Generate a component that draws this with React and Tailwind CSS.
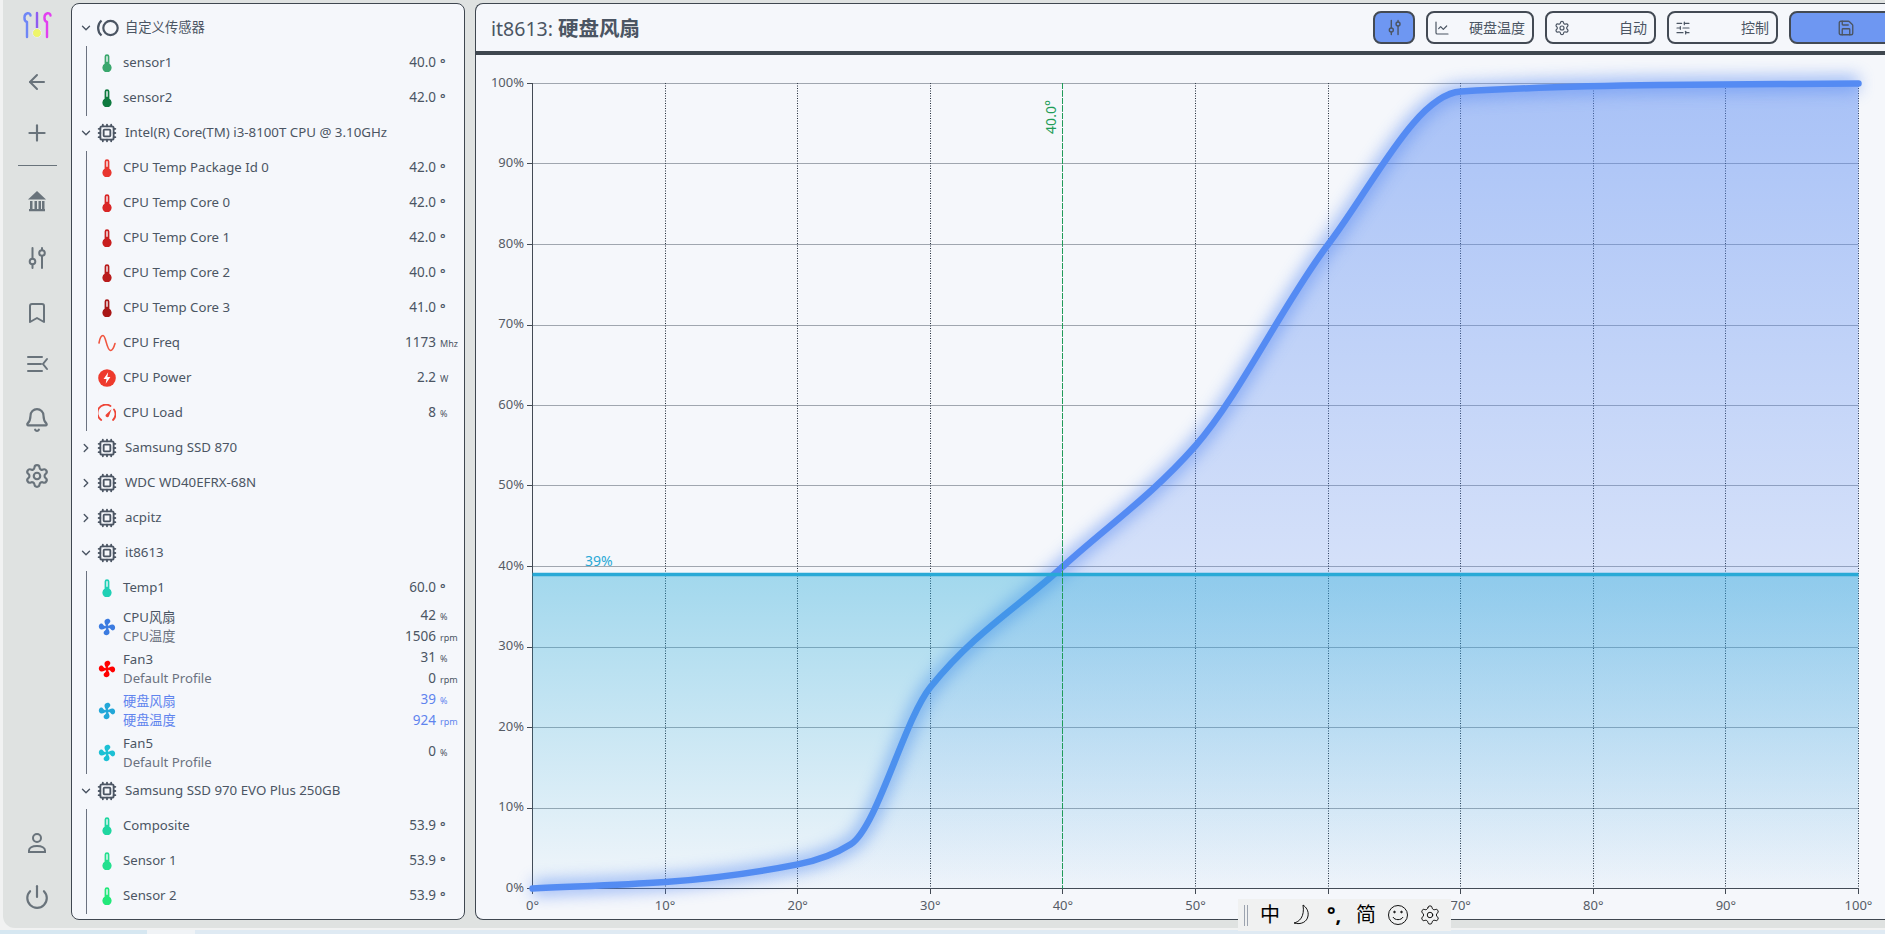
import React from 'react';
import { ArrowLeft, Plus, Bookmark, Bell, Settings, Power, ChevronDown, ChevronRight, Cpu, ChartLine, SlidersHorizontal, Save } from 'lucide-react';

const Thermo = ({ color }) => (
  <svg width="10" height="18" viewBox="0 0 10 18">
    <path d="M2.6 2.6a2.4 2.4 0 0 1 4.8 0v7.2a4.6 4.6 0 1 1-4.8 0z" fill={color} />
    <rect x="4.3" y="2" width="1.4" height="6" rx="0.7" fill="#f5f7fb" />
  </svg>
);

const blade = 'M9 9C7.800 7 6.200 5.500 6.500 3.300 6.800 1.200 9.500 .2 11.300 1.300 12.900 2.300 12.600 4.400 11.200 5.200 10 5.900 9.900 7.500 9 9z';

const Fan = ({ color }) => (
  <svg width="18" height="18" viewBox="0 0 18 18" fill={color}>
    <circle cx="9" cy="9" r="2" />
    <path d={blade} />
    <path d={blade} transform="rotate(90 9 9)" />
    <path d={blade} transform="rotate(180 9 9)" />
    <path d={blade} transform="rotate(270 9 9)" />
  </svg>
);

const Freq = () => (
  <svg width="18" height="18" viewBox="0 0 18 18" fill="none" stroke="#f0553f" strokeWidth="1.600" strokeLinecap="round">
    <path d="M1 9C2 3 3.500 1.500 5 1.500 8 1.500 8.500 16 12.500 16.500 14.500 16.700 16 13 17 9.500" />
  </svg>
);

const Bolt = () => (
  <svg width="18" height="18" viewBox="0 0 18 18">
    <circle cx="9" cy="9" r="8.800" fill="#ee3a2c" />
    <path d="M10.200 3.200 5.600 10h2.900l-.8 4.800L12.400 8H9.400z" fill="#fff" />
  </svg>
);

const Gauge = () => (
  <svg width="18" height="18" viewBox="0 0 18 18" fill="none" stroke="#ee4436" strokeWidth="1.800" strokeLinecap="round">
    <path d="M3.200 16A8 8 0 0 1 12.500 2" />
    <path d="M16 5.500A8 8 0 0 1 15 16" />
    <path d="M7.500 11 13.500 5.200 10.800 12.500A1.900 1.900 0 0 1 7.500 11z" fill="#ee4436" stroke="none" />
  </svg>
);

const rowIcons = { freq: <Freq />, bolt: <Bolt />, gauge: <Gauge /> };

const Sensor = ({ icon, color, name, value, unit }) => (
  <div className="flex h-[35px] items-center pr-[3px]">
    <div className="ml-[11px] flex w-[18px] shrink-0 justify-center">
      {icon ? rowIcons[icon] : <Thermo color={color} />}
    </div>
    <span className="ml-[7px] flex-1 text-[13.200px] leading-none text-[#4b5563]">{name}</span>
    <span className="text-right text-[13.500px] leading-none text-[#4b5563]">{value}</span>
    <span className={`ml-[4px] w-[21px] leading-none text-[#4b5563] ${unit === '°' ? 'text-[13px] font-semibold' : 'text-[9px]'}`}>{unit}</span>
  </div>
);

const FanRow = ({ color, name, profile, pct, rpm, active }) => {
  const text = active ? 'text-[#5f84ee]' : 'text-[#4b5563]';
  const sub = active ? 'text-[#5f84ee]' : 'text-[#6b7280]';
  return (
    <div className="flex h-[42px] items-center pr-[3px]">
      <div className="ml-[11px] flex w-[18px] shrink-0 justify-center">
        <Fan color={color} />
      </div>
      <div className="ml-[7px] flex-1 text-[13.200px] leading-[19px]">
        <div className={text}>{name}</div>
        <div className={sub}>{profile}</div>
      </div>
      <div className="text-[13.500px] leading-[18.500px]">
        <div className="flex items-baseline justify-end">
          <span className={text}>{pct}</span>
          <span className={`ml-[4px] w-[21px] text-[9px] ${text}`}>%</span>
        </div>
        {rpm !== undefined && (
          <div className="flex items-baseline justify-end">
            <span className={text}>{rpm}</span>
            <span className={`ml-[4px] w-[21px] text-[9px] ${text}`}>rpm</span>
          </div>
        )}
      </div>
    </div>
  );
};

const DeviceHead = ({ name, open, custom }) => (
  <div className="flex h-[35px] items-center pl-[7px]">
    {open ? (
      <ChevronDown size={14} strokeWidth={2.400} className="shrink-0 text-[#4b5563]" />
    ) : (
      <ChevronRight size={14} strokeWidth={2.400} className="shrink-0 text-[#4b5563]" />
    )}
    <div className="ml-[4px] flex w-[20px] shrink-0 justify-center">
      {custom ? (
        <svg width="23" height="18" viewBox="0 0 23 18" fill="none" stroke="#4b5563" strokeWidth="2.200" className="shrink-0">
          <circle cx="14.500" cy="9" r="7.200" />
          <path d="M5.500 1.500A10 10 0 0 0 5.500 16.500" />
        </svg>
      ) : (
        <Cpu size={20} strokeWidth={2.200} className="text-[#4b5563]" />
      )}
    </div>
    <span className="ml-[8px] text-[13.300px] leading-none text-[#4b5563]">{name}</span>
  </div>
);

const Group = ({ children }) => <div className="ml-[14px] border-l border-[#6b7280]">{children}</div>;

const Sidebar = () => (
  <aside className="h-[917px] w-[394px] shrink-0 overflow-hidden rounded-lg border border-[#3f4750] bg-[#f5f7fb] pt-[6.500px]">
    <DeviceHead name="自定义传感器" open custom />
    <Group>
      <Sensor color="#3aa76d" name="sensor1" value="40.0" unit="°" />
      <Sensor color="#0e7a3f" name="sensor2" value="42.0" unit="°" />
    </Group>
    <DeviceHead name="Intel(R) Core(TM) i3-8100T CPU @ 3.10GHz" open />
    <Group>
      <Sensor color="#e8362f" name="CPU Temp Package Id 0" value="42.0" unit="°" />
      <Sensor color="#d92626" name="CPU Temp Core 0" value="42.0" unit="°" />
      <Sensor color="#c81e1e" name="CPU Temp Core 1" value="42.0" unit="°" />
      <Sensor color="#b91c1c" name="CPU Temp Core 2" value="40.0" unit="°" />
      <Sensor color="#a81616" name="CPU Temp Core 3" value="41.0" unit="°" />
      <Sensor icon="freq" name="CPU Freq" value="1173" unit="Mhz" />
      <Sensor icon="bolt" name="CPU Power" value="2.2" unit="W" />
      <Sensor icon="gauge" name="CPU Load" value="8" unit="%" />
    </Group>
    <DeviceHead name="Samsung SSD 870" />
    <DeviceHead name="WDC WD40EFRX-68N" />
    <DeviceHead name="acpitz" />
    <DeviceHead name="it8613" open />
    <Group>
      <Sensor color="#1fd0b5" name="Temp1" value="60.0" unit="°" />
      <FanRow color="#3b7be0" name="CPU风扇" profile="CPU温度" pct="42" rpm="1506" />
      <FanRow color="#ff0000" name="Fan3" profile="Default Profile" pct="31" rpm="0" />
      <FanRow color="#22a7d8" name="硬盘风扇" profile="硬盘温度" pct="39" rpm="924" active />
      <FanRow color="#1cc0d4" name="Fan5" profile="Default Profile" pct="0" />
    </Group>
    <DeviceHead name="Samsung SSD 970 EVO Plus 250GB" open />
    <Group>
      <Sensor color="#1fd6a0" name="Composite" value="53.9" unit="°" />
      <Sensor color="#24e08f" name="Sensor 1" value="53.9" unit="°" />
      <Sensor color="#22e87a" name="Sensor 2" value="53.9" unit="°" />
    </Group>
  </aside>
);

const Logo = () => (
  <svg width="30" height="28" viewBox="0 0 30 28" fill="none" strokeWidth="2.400" strokeLinecap="round">
    <path d="M5 26V11M5 11C1.500 10 1.500 3 5.500 2.200 7 2 8.500 3 8.500 4.500" stroke="#6f86f6" />
    <path d="M25 26V11M25 11C21.500 10 21.500 3 25.500 2.200 27 2 28.500 3 28.500 4.500" stroke="#e23ff0" />
    <path d="M15 2V20" stroke="#8f5cf0" />
    <circle cx="15" cy="22" r="4.500" fill="#eef56a" stroke="#e9ecef" strokeWidth="1" />
  </svg>
);

const Tune = ({ size = 24, className }) => (
  <svg width={size} height={size} viewBox="0 0 24 24" fill="none" stroke="currentColor" strokeWidth="2" strokeLinecap="round" className={className}>
    <circle cx="7.500" cy="15.500" r="2.800" />
    <path d="M7.500 2v10.500M7.500 18.500V22" />
    <circle cx="17" cy="7" r="2.800" />
    <path d="M17 2v2M17 10v12" />
  </svg>
);

const Rail = () => (
  <nav className="flex h-[917px] w-[68px] shrink-0 flex-col items-center text-[#69737b]">
    <div className="mt-[8px] h-[28px]">
      <Logo />
    </div>
    <ArrowLeft size={24} strokeWidth={2} className="mt-[31px]" />
    <Plus size={26} strokeWidth={2} className="mt-[26px]" />
    <div className="mt-[19px] h-px w-[39px] bg-[#69737b]" />
    <svg width="24" height="24" viewBox="0 0 24 24" className="mt-[23px]" fill="currentColor">
      <path d="M12 2 3 10.500h18z" />
      <path d="M5 12h2.500v8H5zM9.500 12H12v8H9.500zM13.500 12H16v8h-2.500zM17 12h2.500v8H17zM4 20h16v2.200H4z" />
    </svg>
    <Tune className="mt-[33px]" />
    <Bookmark size={24} strokeWidth={2} className="mt-[31px]" />
    <svg width="24" height="24" viewBox="0 0 24 24" fill="none" stroke="currentColor" strokeWidth="2" strokeLinecap="round" className="mt-[27px]">
      <path d="M3 5h14M3 12h13M3 19h14M22 7l-4 5 4 5" />
    </svg>
    <Bell size={26} strokeWidth={2} className="mt-[31px]" />
    <Settings size={26} strokeWidth={2} className="mt-[30px]" />
    <svg width="24" height="24" viewBox="0 0 24 24" fill="none" stroke="currentColor" strokeWidth="2" strokeLinecap="round" className="mt-auto">
      <circle cx="12" cy="7" r="4" />
      <path d="M4 21v-1.500C4 17 7 15 12 15s8 2 8 4.500V21z" />
    </svg>
    <Power size={26} strokeWidth={2} className="mb-[10px] mt-[29px]" />
  </nav>
);

const points = [[0, 0], [10, 0.8], [20, 3], [24, 5.5], [30, 25], [40, 40], [50, 55], [60, 80], [70, 99], [85, 99.8], [100, 100]];
const X = (t) => 532.5 + 13.26 * t;
const Y = (p) => 888.5 - 8.05 * p;
const snap = (v) => Math.round(v - 0.5) + 0.5;

// monotone cubic through the profile points
const buildCurve = () => {
  const n = points.length;
  const d = [];
  for (let i = 0; i < n - 1; i++) d.push((points[i + 1][1] - points[i][1]) / (points[i + 1][0] - points[i][0]));
  const m = [d[0]];
  for (let i = 1; i < n - 1; i++) m.push((2 * d[i - 1] * d[i]) / (d[i - 1] + d[i]));
  m.push(d[n - 2]);
  let path = `M${X(0)} ${Y(0)}`;
  for (let i = 0; i < n - 1; i++) {
    const [x0, y0] = points[i];
    const [x1, y1] = points[i + 1];
    const h = (x1 - x0) / 3;
    path += `C${X(x0 + h)} ${Y(y0 + m[i] * h)} ${X(x1 - h)} ${Y(y1 - m[i + 1] * h)} ${X(x1)} ${Y(y1)}`;
  }
  return path;
};

const curve = buildCurve();
const ticks = [0, 10, 20, 30, 40, 50, 60, 70, 80, 90, 100];

const Chart = () => (
  <svg viewBox="476 55 1410 864" className="block h-[864px] w-[1410px] shrink-0 font-['Noto_Sans',sans-serif]">
    <defs>
      <linearGradient id="blueFill" gradientUnits="userSpaceOnUse" x1="0" y1="83" x2="0" y2="888">
        <stop offset="0" stopColor="#5b8cf2" stopOpacity="0.5" />
        <stop offset="1" stopColor="#5b8cf2" stopOpacity="0.02" />
      </linearGradient>
      <linearGradient id="cyanFill" gradientUnits="userSpaceOnUse" x1="0" y1="574" x2="0" y2="888">
        <stop offset="0" stopColor="#25a9d8" stopOpacity="0.4" />
        <stop offset="1" stopColor="#25a9d8" stopOpacity="0.02" />
      </linearGradient>
      <filter id="glow" filterUnits="userSpaceOnUse" x="500" y="50" width="1386" height="860">
        <feGaussianBlur stdDeviation="8" />
      </filter>
    </defs>

    {ticks.map((t) => (
      <g key={t}>
        <line x1={532.5} x2={1858.5} y1={snap(Y(t))} y2={snap(Y(t))} stroke="#4b5563" strokeWidth="1" strokeDasharray="1 1" />
        <line x1={snap(X(t))} x2={snap(X(t))} y1={83} y2={888.5} stroke="#1f2937" strokeWidth="1" strokeDasharray="1 1.500" />
        <line x1={527} x2={532.5} y1={snap(Y(t))} y2={snap(Y(t))} stroke="#434a54" />
        <line x1={snap(X(t))} x2={snap(X(t))} y1={888.5} y2={894} stroke="#434a54" />
        <text x={524} y={Y(t) + 3} textAnchor="end" fontSize="13" fill="#555c66">{t}%</text>
        <text x={X(t)} y={909.500} textAnchor="middle" fontSize="13" fill="#555c66">{t}°</text>
      </g>
    ))}
    <line x1={532.5} x2={532.5} y1={83} y2={888.5} stroke="#434a54" />
    <line x1={532.5} x2={1858.5} y1={888.5} y2={888.5} stroke="#434a54" />

    <path d={`${curve}L${X(100)} ${Y(0)}L${X(0)} ${Y(0)}Z`} fill="url(#blueFill)" />
    <path d={curve} fill="none" stroke="#5b8cf2" strokeWidth="15" opacity="0.6" filter="url(#glow)" />
    <path d={curve} fill="none" stroke="#558bf3" strokeWidth="6.500" strokeLinecap="round" />

    <rect x={X(0)} y={Y(39)} width={1326} height={Y(0) - Y(39)} fill="url(#cyanFill)" />
    <line x1={X(0)} x2={X(100)} y1={Y(39)} y2={Y(39)} stroke="#29a9d6" strokeWidth="3.500" />
    <text x={585} y={566} fontSize="14" fill="#29a9d6">39%</text>

    <line x1={snap(X(40))} x2={snap(X(40))} y1={83} y2={888.5} stroke="#1f9d58" strokeWidth="1" strokeDasharray="6 1.500" />
    <text x={0} y={0} fontSize="14" fill="#1f9d58" textAnchor="middle" transform="translate(1056 117) rotate(-90)">40.0°</text>
  </svg>
);

const Toolbar = () => (
  <header className="flex h-[47px] w-[1426px] shrink-0 items-center pl-[15px] text-[#4b5563]">
    <h1 className="mt-[2px] text-[19.500px] font-normal leading-none">
      it8613: <span className="text-[20.500px] font-bold">硬盘风扇</span>
    </h1>
    <div className="ml-auto flex items-center gap-[11px]">
      <button className="flex h-[33px] w-[42px] items-center justify-center rounded-lg border-2 border-[#434a54] bg-[#6e97f2]">
        <Tune size={17} />
      </button>
      <button className="flex h-[33px] w-[108px] items-center justify-between rounded-lg border-2 border-[#434a54] pl-[6px] pr-[7px] text-[14px]">
        <ChartLine size={16} strokeWidth={1.800} />
        硬盘温度
      </button>
      <button className="flex h-[33px] w-[111px] items-center justify-between rounded-lg border-2 border-[#434a54] pl-[7px] pr-[7px] text-[14px]">
        <Settings size={16} strokeWidth={1.800} />
        自动
      </button>
      <button className="flex h-[33px] w-[111px] items-center justify-between rounded-lg border-2 border-[#434a54] pl-[6px] pr-[7px] text-[14px]">
        <SlidersHorizontal size={16} strokeWidth={1.800} />
        控制
      </button>
      <button className="flex h-[33px] w-[113px] items-center justify-center rounded-lg border-2 border-[#434a54] bg-[#6e97f2]">
        <Save size={18} strokeWidth={1.800} />
      </button>
    </div>
  </header>
);

const ImeBar = () => (
  <div className="absolute left-[1238px] top-[899px] flex h-[32px] w-[213px] items-center bg-[#f0f1f1] pl-[6px] text-[20px] leading-none text-black">
    <div className="mr-[6px] h-[21px] w-[4px] border-x border-[#9ca3af]" />
    <span className="flex w-[32px] justify-center">中</span>
    <span className="flex w-[32px] justify-center">
      <svg width="22" height="24" viewBox="0 0 22 24" fill="none" stroke="#111" strokeWidth="1">
        <path d="M12 2C15 4 18 8 17 13 16 19 10 22 3 20 8 19 14 14 12 2z" />
      </svg>
    </span>
    <span className="flex w-[32px] justify-center font-bold">°,</span>
    <span className="flex w-[32px] justify-center">简</span>
    <span className="flex w-[32px] justify-center">
      <svg width="22" height="22" viewBox="0 0 22 22" fill="none" stroke="#111" strokeWidth="1">
        <circle cx="11" cy="11" r="9.500" />
        <path d="M6 13c1.500 3.500 8.500 3.500 10 0" />
        <circle cx="7.500" cy="8" r="0.800" fill="#111" />
        <circle cx="14.500" cy="8" r="0.800" fill="#111" />
      </svg>
    </span>
    <span className="flex w-[32px] justify-center">
      <Settings size={22} strokeWidth={1} />
    </span>
  </div>
);

export default function App() {
  return (
    <div className="relative h-[934px] w-[1885px] overflow-hidden bg-[#f1f2f2] font-['Noto_Sans','Noto_Sans_CJK_SC',sans-serif]">
      <div className="ml-[3px] flex h-[928px] gap-[10px] rounded-bl-xl bg-[#dfe2e1] pt-[3px]">
        <div className="flex">
          <Rail />
          <Sidebar />
        </div>
        <main className="flex h-[917px] min-w-0 flex-1 flex-col overflow-hidden rounded-l-lg border-y border-l border-[#3f4750] bg-[#f5f7fb]">
          <Toolbar />
          <div className="h-[4px] shrink-0 bg-[#3f474f]" />
          <Chart />
        </main>
      </div>
      <div className="mt-[2px] flex h-[4px]">
        <div className="w-[147px] bg-[#d6e7f1]" />
        <div className="w-[48px] bg-[#f0f3f6]" />
        <div className="flex-1 bg-[#dfeaf3]" />
      </div>
      <ImeBar />
    </div>
  );
}
